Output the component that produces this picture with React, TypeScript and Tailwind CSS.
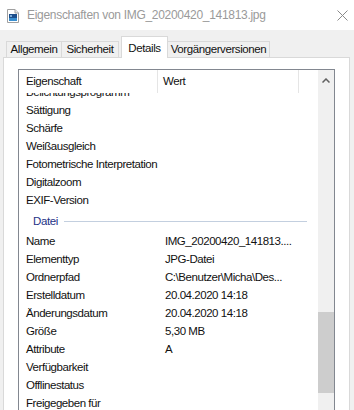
import React from 'react';

const font = { fontFamily: '"Liberation Sans", Arial, sans-serif' };

const before: [string, string][] = [
  ['Belichtungsprogramm', ''],
  ['Sättigung', ''],
  ['Schärfe', ''],
  ['Weißausgleich', ''],
  ['Fotometrische Interpretation', ''],
  ['Digitalzoom', ''],
  ['EXIF-Version', ''],
];

const datei: [string, string][] = [
  ['Name', 'IMG_20200420_141813....'],
  ['Elementtyp', 'JPG-Datei'],
  ['Ordnerpfad', 'C:\\Benutzer\\Micha\\Des...'],
  ['Erstelldatum', '20.04.2020 14:18'],
  ['Änderungsdatum', '20.04.2020 14:18'],
  ['Größe', '5,30 MB'],
  ['Attribute', 'A'],
  ['Verfügbarkeit', ''],
  ['Offlinestatus', ''],
  ['Freigegeben für', ''],
];

const Row = ({ label, value }: { label: string; value: string }) => (
  <div className="flex h-[18px] shrink-0 items-center whitespace-nowrap text-[11.5px] tracking-[-0.45px] text-[#111]">
    <div className="w-[139px] overflow-hidden pl-[7px]">{label}</div>
    <div className="pl-[7px]">{value}</div>
  </div>
);

const FileIcon = () => (
  <svg width="12" height="14" viewBox="0 0 12 14">
    <path d="M0.5 0.5 H8 L11.5 4 V13.5 H0.5 Z" fill="#fff" stroke="#a0a0a0" />
    <path d="M8 0.5 V4 H11.5" fill="#e8e8e8" stroke="#a0a0a0" />
    <rect x="2" y="5" width="8" height="7" fill="#1d4f8c" />
    <rect x="2" y="9" width="8" height="3" fill="#3a8fd0" />
    <circle cx="4" cy="7" r="1" fill="#9cc9ef" />
  </svg>
);

const Tab = ({ label, active, w }: { label: string; active?: boolean; w: string }) => (
  <div
    className={
      active
        ? `relative z-10 flex h-[22px] items-start justify-center border border-b-0 border-[#d9d9d9] bg-white pt-[3px] ${w}`
        : `flex h-[16px] items-center justify-center border border-b-0 border-[#d9d9d9] bg-[#f0f0f0] ${w}`
    }
  >
    <span className="text-[11.5px] tracking-[-0.4px] text-[#111]">{label}</span>
  </div>
);

export default function App() {
  return (
    <div className="h-[410px] w-[354px] overflow-hidden bg-[#f0f0f0]" style={font}>
      <div className="flex h-[30px] items-center bg-white">
        <div className="ml-[7px] mt-[2px] flex">
          <FileIcon />
        </div>
        <span className="ml-[8px] text-[12px] tracking-[-0.3px] text-[#9a9a9a]">
          Eigenschaften von IMG_20200420_141813.jpg
        </span>
        <div className="ml-auto mr-[6px] flex">
          <svg width="11" height="11" viewBox="0 0 11 11">
            <path d="M0.5 0.5 L10.5 10.5 M10.5 0.5 L0.5 10.5" stroke="#8a8a8a" strokeWidth="1" />
          </svg>
        </div>
      </div>

      <div className="mt-[6px] flex items-end pl-[6px]">
        <Tab label="Allgemein" w="w-[56px]" />
        <Tab label="Sicherheit" w="w-[58px] -ml-px" />
        <div className="-mb-px ml-[2px] flex">
          <Tab label="Details" active w="w-[47px]" />
        </div>
        <Tab label="Vorgängerversionen" w="w-[103px] -ml-px" />
      </div>

      <div className="ml-[3px] h-[400px] w-[347px] border border-[#d9d9d9] bg-white pl-[14px] pt-[11px]">
        <div className="flex h-[360px] w-[317px] border border-[#828790] bg-white">
          <div className="flex w-[299px] flex-col">
            <div className="flex h-[23px] shrink-0 items-center whitespace-nowrap text-[11.5px] tracking-[-0.45px] text-[#111]">
              <div className="flex h-full w-[139px] items-center border-r border-[#e5e5e5] pl-[7px]">Eigenschaft</div>
              <div className="flex h-full w-[141px] items-center border-r border-[#e5e5e5] pl-[5px]">Wert</div>
            </div>
            <div className="flex flex-1 flex-col overflow-hidden">
              <div className="-mt-[9px] flex flex-col">
                {before.map(([l, v]) => (
                  <Row key={l} label={l} value={v} />
                ))}
                <div className="flex h-[23px] shrink-0 items-center pl-[14px]">
                  <span className="text-[11.5px] tracking-[-0.4px] text-[#1e3287]">Datei</span>
                  <div className="ml-[6px] mr-[11px] h-px flex-1 bg-[#c3cfdf]" />
                </div>
                {datei.map(([l, v]) => (
                  <Row key={l} label={l} value={v} />
                ))}
              </div>
            </div>
          </div>
          <div className="flex w-[16px] flex-col bg-[#f0f0f0]">
            <div className="flex h-[17px] shrink-0 items-center justify-center pt-[4px]">
              <svg width="8" height="5" viewBox="0 0 8 5">
                <path d="M0.5 4.5 L4 1 L7.5 4.5" fill="none" stroke="#606060" strokeWidth="1.5" />
              </svg>
            </div>
            <div className="h-[225px] shrink-0" />
            <div className="h-[81px] shrink-0 bg-[#cdcdcd]" />
          </div>
        </div>
      </div>
    </div>
  );
}
